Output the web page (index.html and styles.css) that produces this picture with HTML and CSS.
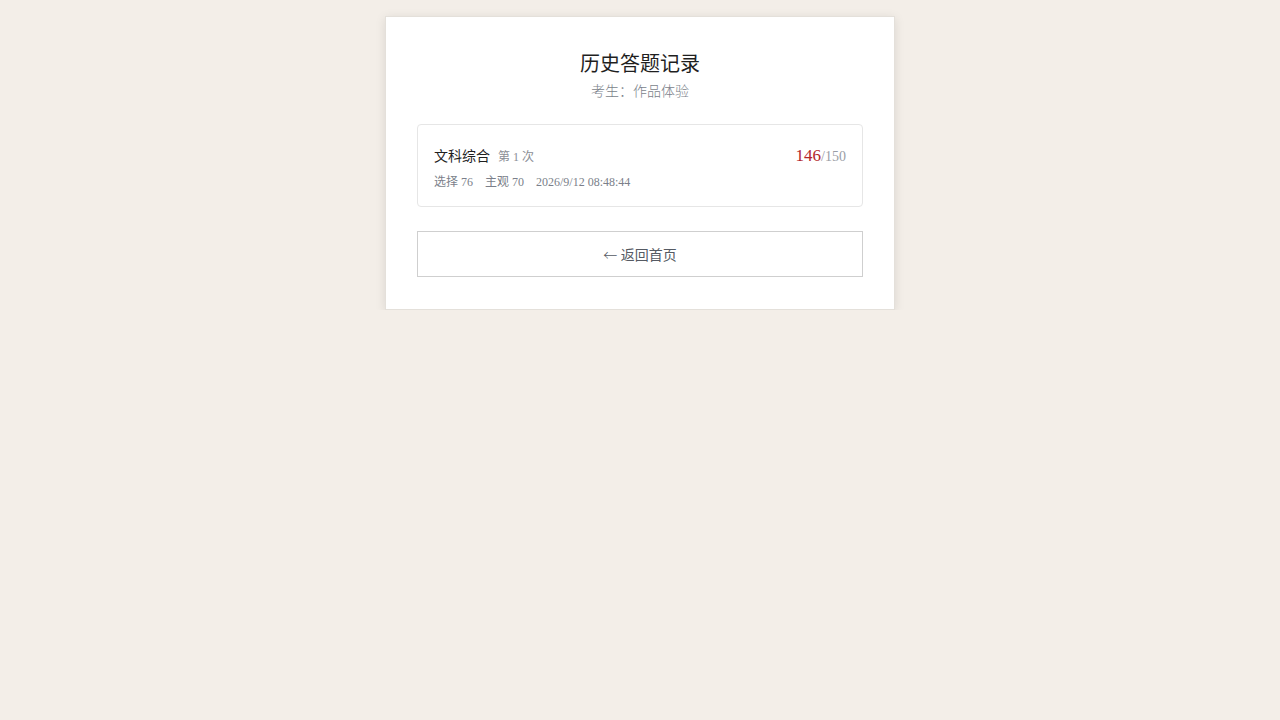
FILE: index.html
```html
<!DOCTYPE html>
<html lang="zh">
<head>
<meta charset="utf-8">
<title>历史答题记录</title>
<link rel="stylesheet" href="styles.css">
</head>
<body>
<main class="card">
  <h1 class="title">历史答题记录</h1>
  <p class="subtitle">考生：作品体验</p>
  <section class="record">
    <div class="record-top">
      <div class="record-name">
        <span class="subject">文科综合</span>
        <span class="attempt">第 1 次</span>
      </div>
      <div class="score"><span class="score-got">146</span><span class="score-total">/150</span></div>
    </div>
    <div class="record-meta">
      <span>选择 76</span>
      <span>主观 70</span>
      <span>2026/9/12 08:48:44</span>
    </div>
  </section>
  <button class="back" type="button"><span class="arrow">←</span> 返回首页</button>
</main>
</body>
</html>
```

FILE: styles.css
```css
html, body {
  margin: 0;
  padding: 0;
}
body {
  background: #f3eee8;
  font-family: "Liberation Serif", "Noto Sans CJK SC", serif;
  color: #222;
  display: flex;
  justify-content: center;
  padding-top: 16px;
}
.card {
  width: 510px;
  box-sizing: border-box;
  background: #fff;
  border: 1px solid #e4e0da;
  box-shadow: 0 2px 10px rgba(0, 0, 0, 0.1);
  padding: 32px 31px 32px;
  display: flex;
  flex-direction: column;
}
.title {
  margin: 0;
  text-align: center;
  font-family: "Noto Sans CJK SC", sans-serif;
  font-size: 20px;
  line-height: 28px;
  font-weight: 400;
  color: #1f1f1f;
}
.subtitle {
  margin: 3px 0 0;
  text-align: center;
  font-family: "Noto Sans CJK SC", sans-serif;
  font-size: 14px;
  line-height: 20px;
  font-weight: 300;
  color: #7b7f8a;
}
.record {
  margin-top: 24px;
  border: 1px solid #e6e6e6;
  border-radius: 4px;
  padding: 19px 16px 15px 16px;
  display: flex;
  flex-direction: column;
  gap: 3px;
}
.record-top {
  display: flex;
  justify-content: space-between;
  align-items: baseline;
}
.record-name {
  display: flex;
  align-items: baseline;
  gap: 8px;
}
.subject {
  font-size: 14px;
  line-height: 26px;
  color: #1f1f1f;
}
.attempt {
  font-size: 12px;
  color: #8a8d95;
}
.score-got {
  font-size: 17px;
  color: #b3262b;
}
.score-total {
  font-size: 14px;
  color: #9a9da5;
}
.record-meta {
  display: flex;
  gap: 12px;
  font-size: 12px;
  line-height: 18px;
  color: #7b7f8a;
}
.back {
  margin-top: 24px;
  height: 46px;
  background: #fff;
  border: 1px solid #cfcfcf;
  border-radius: 0;
  font-family: "Liberation Serif", "Noto Sans CJK SC", serif;
  font-size: 14px;
  color: #555a63;
  cursor: pointer;
}
.arrow {
  font-family: "Noto Sans CJK SC", sans-serif;
  font-weight: 300;
}
```
